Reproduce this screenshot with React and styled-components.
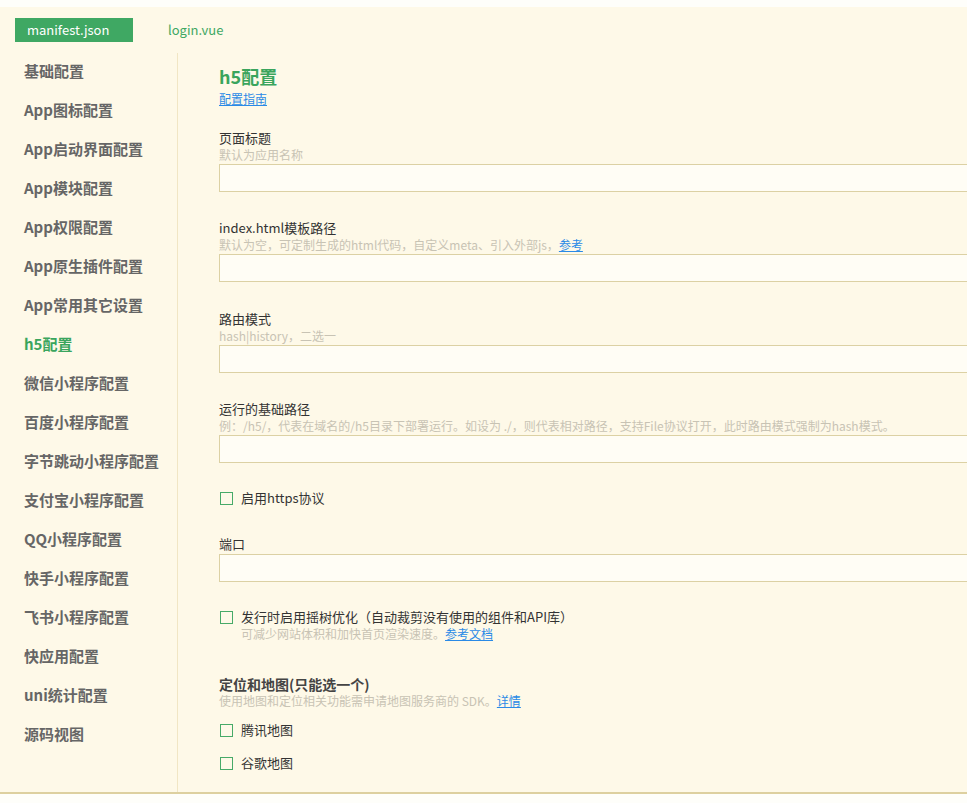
import React from 'react'
import styled, { createGlobalStyle } from 'styled-components'

const GlobalStyle = createGlobalStyle`
  html, body {
    margin: 0;
    padding: 0;
    background: #fefefa;
    overflow: hidden;
  }
  body {
    font-family: "Noto Sans CJK SC", "Noto Sans", sans-serif;
    font-size: 13px;
  }
`

const Page = styled.div`
  margin-top: 7px;
  height: 787px;
  background: #fef9e8;
  display: flex;
  flex-direction: column;
  border-bottom: 2px solid #ddd0a0;
  box-sizing: border-box;
  width: 967px;
`

const TabBar = styled.div`
  display: flex;
  align-items: center;
  padding: 11px 0 0 15px;
`

const Tab = styled.div`
  height: 24px;
  line-height: 24px;
  font-size: 13px;
  padding: ${({ active }) => (active ? '0 12px' : '0 20px 0 35px')};
  width: ${({ active }) => (active ? '94px' : 'auto')};
  background: ${({ active }) => (active ? '#3fa863' : 'transparent')};
  color: ${({ active }) => (active ? '#fff' : '#3fa863')};
`

const Body = styled.div`
  flex: 1;
  display: flex;
  min-height: 0;
  margin-top: 11px;
`

const Sidebar = styled.nav`
  width: 178px;
  flex-shrink: 0;
  border-right: 1px solid #f1e6c4;
  box-sizing: border-box;
  padding: 8px 0 0 24px;
  display: flex;
  flex-direction: column;
  gap: 19px;
`

const NavItem = styled.div`
  font-size: 15px;
  line-height: 20px;
  font-weight: bold;
  color: ${({ active }) => (active ? '#3aa55d' : '#666')};
`

const Content = styled.main`
  flex: 1;
  padding: 11px 0 0 41px;
  display: flex;
  flex-direction: column;
`

const Title = styled.h1`
  margin: 0;
  font-size: 18px;
  line-height: 24px;
  color: #3aa55d;
  font-weight: bold;
`

const Link = styled.a`
  color: #2a8ae6;
  text-decoration: underline;
  font-size: 12px;
  line-height: 16px;
  cursor: pointer;
`

const GuideLink = styled(Link)`
  display: block;
  align-self: flex-start;
  margin: 3px 0 22px;
`

const Field = styled.div`
  display: flex;
  flex-direction: column;
  margin-bottom: ${({ gap }) => gap ?? 28}px;
`

const Label = styled.div`
  font-size: 13px;
  line-height: 18px;
  color: #333;
`

const Hint = styled.div`
  font-size: 12px;
  line-height: 16px;
  height: 16px;
  color: #c8c3b4;
  white-space: nowrap;
  margin-bottom: ${({ gap }) => gap ?? 0}px;
`

const Input = styled.input`
  display: block;
  width: 820px;
  height: 28px;
  box-sizing: border-box;
  border: 1px solid #dcd1a4;
  background: #fffdf5;
  outline: none;
  margin: 1px 0 0;
`

const CheckRow = styled.div`
  display: flex;
  align-items: flex-start;
  gap: 8px;
  font-size: 13px;
  line-height: 18px;
  color: #333;
  margin-bottom: ${({ gap }) => gap ?? 22}px;
`

const Box = styled.div`
  width: 13px;
  height: 13px;
  border: 1px solid #47aa68;
  box-sizing: border-box;
  flex-shrink: 0;
  margin: 3px 0 0 1px;
`

const CheckText = styled.div`
  display: flex;
  flex-direction: column;
`

const Section = styled.div`
  font-size: 14px;
  line-height: 18px;
  height: 18px;
  font-weight: bold;
  color: #444;
`

const navItems = [
  '基础配置',
  'App图标配置',
  'App启动界面配置',
  'App模块配置',
  'App权限配置',
  'App原生插件配置',
  'App常用其它设置',
  'h5配置',
  '微信小程序配置',
  '百度小程序配置',
  '字节跳动小程序配置',
  '支付宝小程序配置',
  'QQ小程序配置',
  '快手小程序配置',
  '飞书小程序配置',
  '快应用配置',
  'uni统计配置',
  '源码视图',
]

const Checkbox = ({ children, hint, gap }) => (
  <CheckRow gap={gap}>
    <Box />
    <CheckText>
      <span>{children}</span>
      {hint && <Hint>{hint}</Hint>}
    </CheckText>
  </CheckRow>
)

export default function App() {
  return (
    <>
      <GlobalStyle />
      <Page>
        <TabBar>
          <Tab active>manifest.json</Tab>
          <Tab>login.vue</Tab>
        </TabBar>
        <Body>
          <Sidebar>
            {navItems.map((item) => (
              <NavItem key={item} active={item === 'h5配置'}>{item}</NavItem>
            ))}
          </Sidebar>
          <Content>
            <Title>h5配置</Title>
            <GuideLink>配置指南</GuideLink>

            <Field gap={27}>
              <Label>页面标题</Label>
              <Hint>默认为应用名称</Hint>
              <Input />
            </Field>

            <Field gap={28}>
              <Label>index.html模板路径</Label>
              <Hint>默认为空，可定制生成的html代码，自定义meta、引入外部js，<Link>参考</Link></Hint>
              <Input />
            </Field>

            <Field gap={27}>
              <Label>路由模式</Label>
              <Hint>hash|history，二选一</Hint>
              <Input />
            </Field>

            <Field gap={26}>
              <Label>运行的基础路径</Label>
              <Hint>例：/h5/，代表在域名的/h5目录下部署运行。如设为 ./，则代表相对路径，支持File协议打开，此时路由模式强制为hash模式。</Hint>
              <Input />
            </Field>

            <Checkbox gap={28}>启用https协议</Checkbox>

            <Field gap={26}>
              <Label>端口</Label>
              <Input />
            </Field>

            <Checkbox
              gap={33}
              hint={<>可减少网站体积和加快首页渲染速度。<Link>参考文档</Link></>}
            >
              发行时启用摇树优化（自动裁剪没有使用的组件和API库）
            </Checkbox>

            <Section>定位和地图(只能选一个)</Section>
            <Hint gap={12}>使用地图和定位相关功能需申请地图服务商的 SDK。<Link>详情</Link></Hint>
            <Checkbox gap={15}>腾讯地图</Checkbox>
            <Checkbox>谷歌地图</Checkbox>
          </Content>
        </Body>
      </Page>
    </>
  )
}
